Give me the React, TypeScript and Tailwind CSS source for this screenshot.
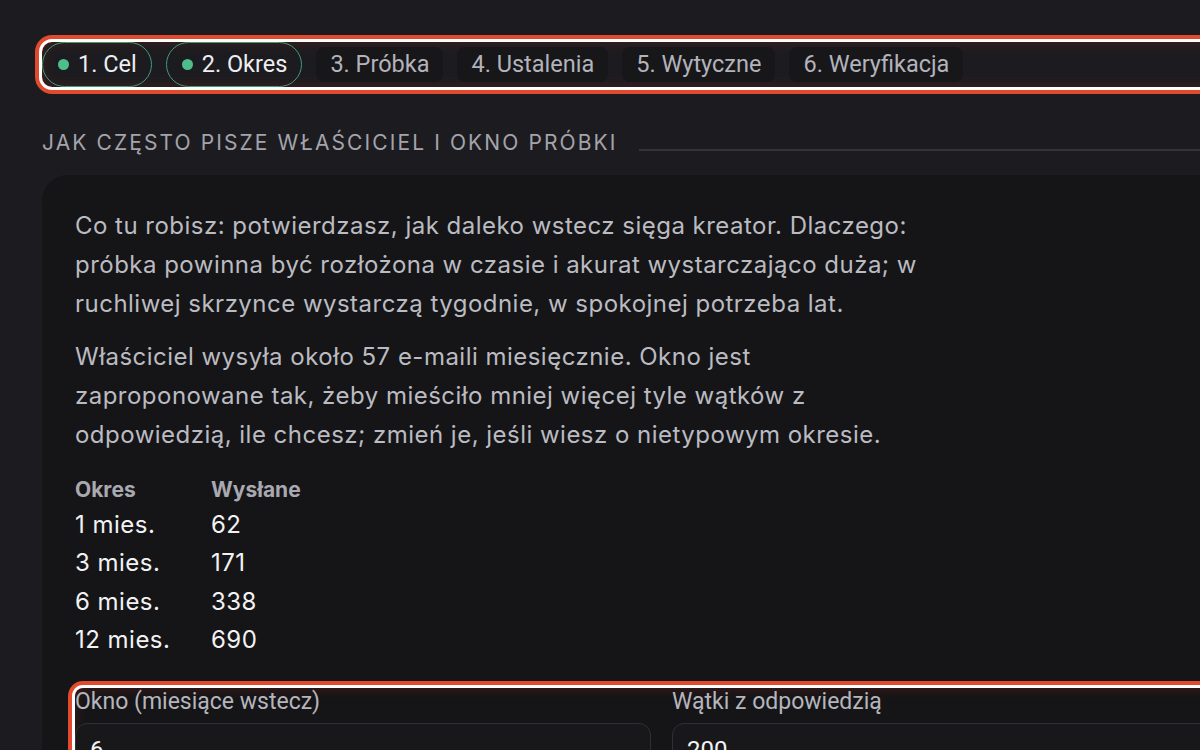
import React from 'react';

const tabs = [
  { label: '1. Cel', done: true },
  { label: '2. Okres', done: true },
  { label: '3. Próbka', done: false },
  { label: '4. Ustalenia', done: false },
  { label: '5. Wytyczne', done: false },
  { label: '6. Weryfikacja', done: false },
];

const rows = [
  ['1 mies.', '62'],
  ['3 mies.', '171'],
  ['6 mies.', '338'],
  ['12 mies.', '690'],
];

const highlight =
  'shadow-[0_0_0_3px_#ffffff,0_0_0_7px_#e14a2d,inset_0_0_14px_rgba(150,40,30,0.35)]';

export default function App() {
  return (
    <div
      className="w-[1200px] h-[750px] overflow-hidden bg-[#1c1c20]"
      style={{ fontFamily: 'Inter, "Noto Sans", sans-serif' }}
    >
      <div className="w-[1281px] pl-[42px] pt-[42px]">
        {/* step tabs */}
        <div
          className={`flex items-center gap-[14px] h-[45px] rounded-[10px] ${highlight}`}
          style={{ fontFamily: 'Roboto, "Liberation Sans", sans-serif' }}
        >
          {tabs.map((t) =>
            t.done ? (
              <div
                key={t.label}
                className="flex items-center gap-[9px] h-[45px] pl-[15px] pr-[14px] rounded-full border border-[#3f9d73] text-[23.5px] text-[#eeeef0]"
              >
                <span className="w-[11px] h-[11px] rounded-full bg-[#4fbd8b]" />
                {t.label}
              </div>
            ) : (
              <div
                key={t.label}
                className="flex items-center h-[35px] px-[14px] rounded-[8px] bg-[#17171a] text-[23.5px] text-[#b3b3bb]"
              >
                {t.label}
              </div>
            )
          )}
        </div>

        {/* section heading */}
        <div className="flex items-center gap-[22px] mt-[40px]">
          <h2 className="text-[21px] tracking-[0.1em] text-[#a4a4ac] whitespace-nowrap">
            JAK CZĘSTO PISZE WŁAŚCICIEL I OKNO PRÓBKI
          </h2>
          <div className="flex-1 h-[2px] bg-[#34343a] mt-[14px]" />
        </div>

        {/* card */}
        <div className="mt-[16px] bg-[#151517] rounded-[26px] px-[33px] pt-[31px] pb-[40px]">
          <div className="max-w-[850px] text-[24px] tracking-[0.02em] leading-[39px] text-[#bbbbc2]">
            <p>
              Co tu robisz: potwierdzasz, jak daleko wstecz sięga kreator. Dlaczego: próbka powinna
              być rozłożona w czasie i akurat wystarczająco duża; w ruchliwej skrzynce wystarczą
              tygodnie, w spokojnej potrzeba lat.
            </p>
            <p className="mt-[14px]">
              Właściciel wysyła około 57 e-maili miesięcznie. Okno jest zaproponowane tak, żeby
              mieściło mniej więcej tyle wątków z odpowiedzią, ile chcesz; zmień je, jeśli wiesz o
              nietypowym okresie.
            </p>
          </div>

          <table className="mt-[19px] text-left">
            <thead>
              <tr className="text-[21px] font-bold text-[#a9a9b1] leading-[33px]">
                <th className="w-[136px] font-bold">Okres</th>
                <th className="font-bold">Wysłane</th>
              </tr>
            </thead>
            <tbody>
              {rows.map(([p, n]) => (
                <tr key={p} className="text-[24px] tracking-[0.02em] leading-[38.5px] text-[#f2f2f4]">
                  <td>{p}</td>
                  <td>{n}</td>
                </tr>
              ))}
            </tbody>
          </table>

          {/* form */}
          <div
            className={`mt-[28px] grid grid-cols-2 gap-[21px] rounded-[8px] ${highlight}`}
            style={{ fontFamily: 'Roboto, "Liberation Sans", sans-serif' }}
          >
            <label className="flex flex-col gap-[7px]">
              <span className="text-[23px] leading-[28px] text-[#b5b5bd]">Okno (miesiące wstecz)</span>
              <div className="h-[54px] rounded-[12px] border border-[#2f2f35] bg-[#18181b] px-[14px] flex items-center text-[24px] text-[#f2f2f4]">
                6
              </div>
            </label>
            <label className="flex flex-col gap-[7px]">
              <span className="text-[23px] leading-[28px] text-[#b5b5bd]">Wątki z odpowiedzią</span>
              <div className="h-[54px] rounded-[12px] border border-[#2f2f35] bg-[#18181b] px-[14px] flex items-center text-[24px] text-[#f2f2f4]">
                200
              </div>
            </label>
          </div>
        </div>
      </div>
    </div>
  );
}
